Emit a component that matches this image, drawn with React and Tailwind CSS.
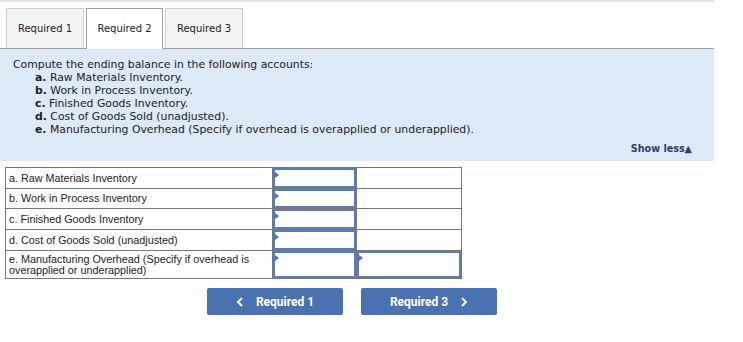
import React from 'react';

const rows = [
  { label: 'a. Raw Materials Inventory', h: 'h-[20px]' },
  { label: 'b. Work in Process Inventory', h: 'h-[20px]' },
  { label: 'c. Finished Goods Inventory', h: 'h-[21px]' },
  { label: 'd. Cost of Goods Sold (unadjusted)', h: 'h-[21px]' },
  { label: 'e. Manufacturing Overhead (Specify if overhead is overapplied or underapplied)', h: 'h-[28px]', last: true },
];

function Field() {
  return (
    <div className="relative h-full w-full border-2 border-[#5b7db5] bg-white">
      <span className="absolute left-0 top-[2px] h-0 w-0 border-y-[3px] border-l-[4px] border-y-transparent border-l-[#4a72c0]" />
    </div>
  );
}

export default function App() {
  return (
    <div className="h-[342px] w-[743px] bg-white font-['DejaVu_Sans',sans-serif]">
      <div className="h-[2px] w-[714px] bg-[#e2e2e2]" />
      <div className="w-[714px]">
        <div className="ml-[6px] mt-[6px] flex gap-[2px] text-[10px] text-[#222]">
          <div className="flex h-[40px] w-[78px] items-center justify-center border border-b-0 border-[#cfcfcf] bg-[#f2f2f2]">
            Required 1
          </div>
          <div className="relative z-10 -mb-px flex h-[41px] w-[77px] items-center justify-center border border-b-0 border-[#a0a0a0] bg-white pb-px">
            Required 2
          </div>
          <div className="flex h-[40px] w-[78px] items-center justify-center border border-b-0 border-[#cfcfcf] bg-[#f2f2f2]">
            Required 3
          </div>
        </div>
        <div className="border-t border-[#a0a0a0] bg-[#dde9f7] px-[13px] pb-[6px] pt-[9px] text-[10.85px] leading-[13px] text-[#222]">
          <p>Compute the ending balance in the following accounts:</p>
          <ul className="ml-[22px]">
            <li><b>a.</b> Raw Materials Inventory.</li>
            <li><b>b.</b> Work in Process Inventory.</li>
            <li><b>c.</b> Finished Goods Inventory.</li>
            <li><b>d.</b> Cost of Goods Sold (unadjusted).</li>
            <li><b>e.</b> Manufacturing Overhead (Specify if overhead is overapplied or underapplied).</li>
          </ul>
          <div className="mt-[6px] flex justify-end pr-[9px]">
            <span className="text-[9.6px] font-bold text-[#2c3e6e]">Show less&#9650;</span>
          </div>
        </div>
      </div>
      <div className="ml-[5px] mt-[6px] w-[457px] border border-[#777] font-['Liberation_Sans',sans-serif] text-[10.8px] leading-[11px] text-[#222]">
        {rows.map((r, i) => (
          <div key={i} className={`flex ${r.h} ${i > 0 ? 'border-t border-[#777]' : ''}`}>
            <div className="flex w-[267px] items-center border-r border-[#777] px-[3px]">{r.label}</div>
            <div className="w-[84px] border-r border-[#777]">
              <Field />
            </div>
            <div className="flex-1">{r.last && <Field />}</div>
          </div>
        ))}
      </div>
      <div className="ml-[207px] mt-[9px] flex gap-[18px] font-['Roboto',sans-serif] text-[12px] font-bold text-white">
        <button className="flex h-[27px] w-[136px] items-center justify-center gap-[12px] rounded-[2px] bg-[#4a72b0]">
          <svg width="8" height="10" viewBox="0 0 8 10"><path d="M6 1 L2 5 L6 9" fill="none" stroke="white" strokeWidth="2" /></svg>
          Required 1
        </button>
        <button className="flex h-[27px] w-[136px] items-center justify-center gap-[12px] rounded-[2px] bg-[#4a72b0]">
          Required 3
          <svg width="8" height="10" viewBox="0 0 8 10"><path d="M2 1 L6 5 L2 9" fill="none" stroke="white" strokeWidth="2" /></svg>
        </button>
      </div>
    </div>
  );
}
